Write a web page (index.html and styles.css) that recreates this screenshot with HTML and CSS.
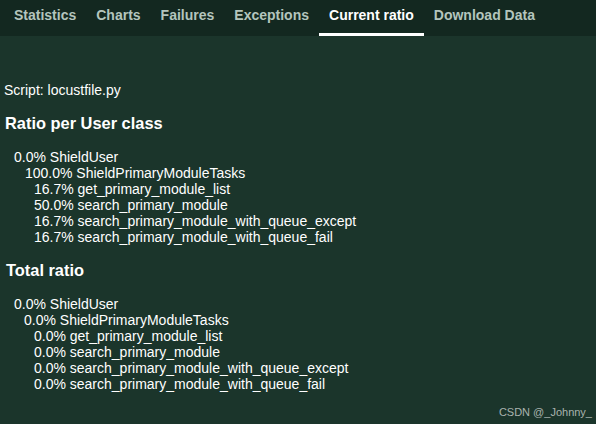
FILE: index.html
```html
<!DOCTYPE html>
<html>
<head>
<meta charset="utf-8">
<link rel="stylesheet" href="styles.css">
</head>
<body>
<nav class="tabs">
  <a class="tab">Statistics</a>
  <a class="tab">Charts</a>
  <a class="tab">Failures</a>
  <a class="tab">Exceptions</a>
  <a class="tab active">Current ratio</a>
  <a class="tab">Download Data</a>
</nav>
<main class="content">
  <p class="script">Script: locustfile.py</p>
  <h3 class="title first">Ratio per User class</h3>
  <div class="tree">
    <div class="row l0">0.0% ShieldUser</div>
    <div class="row l1">100.0% ShieldPrimaryModuleTasks</div>
    <div class="row l2">16.7% get_primary_module_list</div>
    <div class="row l2">50.0% search_primary_module</div>
    <div class="row l2">16.7% search_primary_module_with_queue_except</div>
    <div class="row l2">16.7% search_primary_module_with_queue_fail</div>
  </div>
  <h3 class="title second">Total ratio</h3>
  <div class="tree">
    <div class="row l0">0.0% ShieldUser</div>
    <div class="row l1b">0.0% ShieldPrimaryModuleTasks</div>
    <div class="row l2">0.0% get_primary_module_list</div>
    <div class="row l2">0.0% search_primary_module</div>
    <div class="row l2">0.0% search_primary_module_with_queue_except</div>
    <div class="row l2">0.0% search_primary_module_with_queue_fail</div>
  </div>
  <div class="watermark">CSDN @_Johnny_</div>
</main>
</body>
</html>
```
FILE: styles.css
```css
html, body {
  margin: 0;
  padding: 0;
  height: 100%;
}
body {
  background: #1b352b;
  font-family: "Liberation Sans", Arial, sans-serif;
  font-size: 14px;
  color: #ffffff;
  overflow: hidden;
}
.tabs {
  display: flex;
  height: 36px;
  padding-left: 4px;
  background: #132820;
  box-sizing: border-box;
}
.tab {
  display: block;
  padding: 0 10px;
  line-height: 31px;
  height: 33px;
  border-bottom: 3px solid transparent;
  font-weight: bold;
  font-size: 14px;
  color: #b4c5bd;
  white-space: nowrap;
}
.tab.active {
  color: #ffffff;
  border-bottom-color: #ffffff;
}
.content {
  position: relative;
  height: 388px;
  padding-left: 4px;
  box-sizing: border-box;
}
.script {
  margin: 0;
  padding-top: 46px;
  line-height: 16px;
}
.title {
  margin: 0;
  font-size: 16.4px;
  font-weight: bold;
  line-height: 19px;
}
.title.first {
  margin-top: 16px;
  margin-bottom: 16px;
  padding-left: 1px;
}
.title.second {
  margin-top: 16px;
  margin-bottom: 16px;
  padding-left: 2px;
}
.tree {
  padding-left: 10px;
}
.row {
  line-height: 16px;
  white-space: nowrap;
}
.l1 { padding-left: 11px; }
.l1b { padding-left: 10px; }
.l2 { padding-left: 20px; }
.watermark {
  position: absolute;
  right: 4px;
  bottom: 6px;
  font-size: 11px;
  color: #a9b3ae;
}
```
